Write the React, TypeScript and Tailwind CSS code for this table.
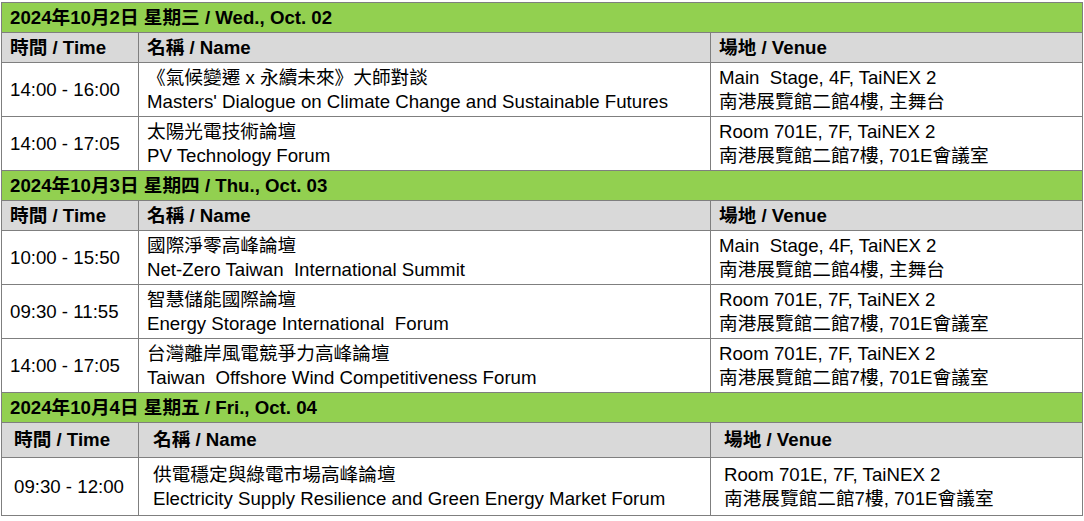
import React from "react";

type Row = { time: string; zh: string; en: string; v1: string; v2: string };
type Section = { title: string; rows: Row[]; last?: boolean };

const sections: Section[] = [
  {
    title: "2024年10月2日 星期三 / Wed., Oct. 02",
    rows: [
      {
        time: "14:00 - 16:00",
        zh: "《氣候變遷 x 永續未來》大師對談",
        en: "Masters' Dialogue on Climate Change and Sustainable Futures",
        v1: "Main  Stage, 4F, TaiNEX 2",
        v2: "南港展覽館二館4樓, 主舞台",
      },
      {
        time: "14:00 - 17:05",
        zh: "太陽光電技術論壇",
        en: "PV Technology Forum",
        v1: "Room 701E, 7F, TaiNEX 2",
        v2: "南港展覽館二館7樓, 701E會議室",
      },
    ],
  },
  {
    title: "2024年10月3日 星期四 / Thu., Oct. 03",
    rows: [
      {
        time: "10:00 - 15:50",
        zh: "國際淨零高峰論壇",
        en: "Net-Zero Taiwan  International Summit",
        v1: "Main  Stage, 4F, TaiNEX 2",
        v2: "南港展覽館二館4樓, 主舞台",
      },
      {
        time: "09:30 - 11:55",
        zh: "智慧儲能國際論壇",
        en: "Energy Storage International  Forum",
        v1: "Room 701E, 7F, TaiNEX 2",
        v2: "南港展覽館二館7樓, 701E會議室",
      },
      {
        time: "14:00 - 17:05",
        zh: "台灣離岸風電競爭力高峰論壇",
        en: "Taiwan  Offshore Wind Competitiveness Forum",
        v1: "Room 701E, 7F, TaiNEX 2",
        v2: "南港展覽館二館7樓, 701E會議室",
      },
    ],
  },
  {
    title: "2024年10月4日 星期五 / Fri., Oct. 04",
    last: true,
    rows: [
      {
        time: "09:30 - 12:00",
        zh: "供電穩定與綠電市場高峰論壇",
        en: "Electricity Supply Resilience and Green Energy Market Forum",
        v1: "Room 701E, 7F, TaiNEX 2",
        v2: "南港展覽館二館7樓, 701E會議室",
      },
    ],
  },
];

const font = {
  fontFamily: '"Liberation Sans", Arial, "Noto Sans CJK TC", sans-serif',
};

function SectionBlock({ s }: { s: Section }) {
  const pad1 = s.last ? "pl-[12px]" : "pl-[8px]";
  const pad2 = s.last ? "pl-[14px]" : "pl-[8px]";
  const pad3 = s.last ? "pl-[13px]" : "pl-[8px]";
  return (
    <>
      <div className="h-[30px] bg-[#92d050] border-b border-[#7f7f7f] flex items-center pl-[8px] font-bold text-[18.67px]">
        {s.title}
      </div>
      <div
        className={
          "grid grid-cols-[137px_572px_1fr] bg-[#d9d9d9] border-b border-[#7f7f7f] font-bold text-[18.67px] " +
          (s.last ? "h-[35px]" : "h-[30px]")
        }
      >
        <div className={"border-r border-[#7f7f7f] flex items-center " + pad1}>時間 / Time</div>
        <div className={"border-r border-[#7f7f7f] flex items-center " + pad2}>名稱 / Name</div>
        <div className={"flex items-center " + pad3}>場地 / Venue</div>
      </div>
      {s.rows.map((r, i) => (
        <div
          key={i}
          className={
            "grid grid-cols-[137px_572px_1fr] border-b border-[#7f7f7f] text-[18.67px] leading-[24px] " +
            (s.last ? "h-[58px]" : "h-[54px]")
          }
        >
          <div className={"border-r border-[#7f7f7f] flex items-center " + pad1}>{r.time}</div>
          <div className={"border-r border-[#7f7f7f] flex flex-col justify-center " + pad2}>
            <div className="whitespace-pre">{r.zh}</div>
            <div className="whitespace-pre">{r.en}</div>
          </div>
          <div className={"flex flex-col justify-center " + pad3}>
            <div className="whitespace-pre">{r.v1}</div>
            <div className="whitespace-pre">{r.v2}</div>
          </div>
        </div>
      ))}
    </>
  );
}

export default function App() {
  return (
    <div className="w-[1084px] h-[521px] bg-white pt-[2px] pl-[1px]" style={font}>
      <div className="w-[1082px] border border-[#7f7f7f] border-b-0 text-black">
        {sections.map((s, i) => (
          <SectionBlock key={i} s={s} />
        ))}
      </div>
    </div>
  );
}
